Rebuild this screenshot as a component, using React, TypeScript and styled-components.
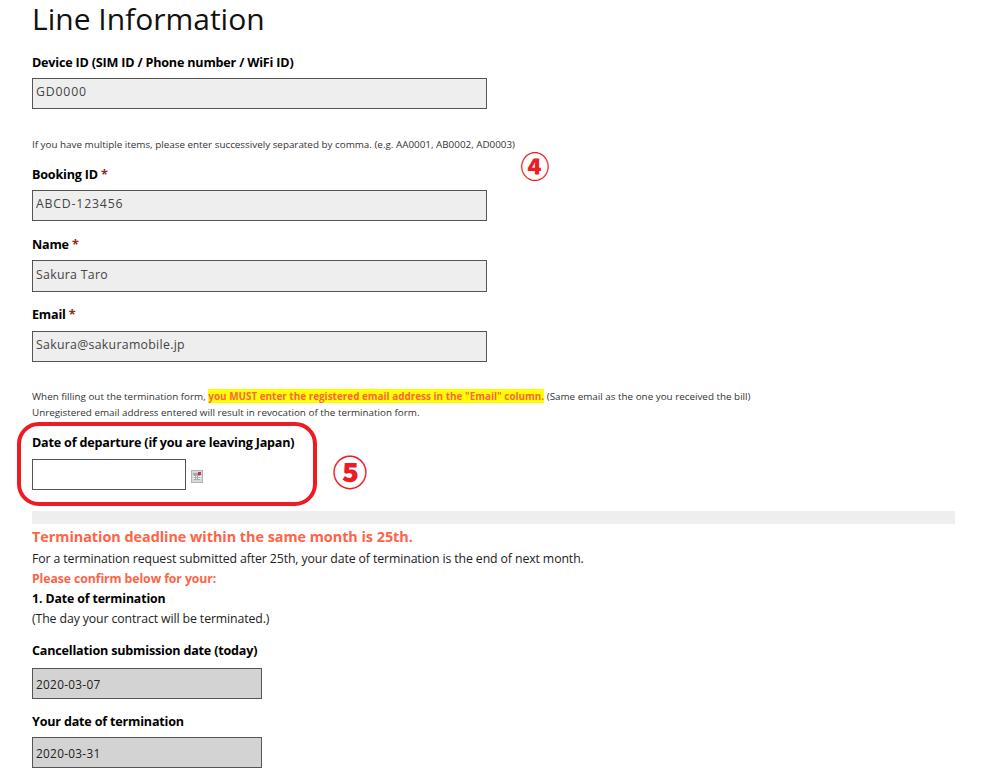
import React from "react";
import styled, { createGlobalStyle } from "styled-components";

const GlobalStyle = createGlobalStyle`
  html, body {
    margin: 0;
    padding: 0;
    background: #fff;
  }
  body {
    font-family: "Open Sans", "Noto Sans", "Liberation Sans", sans-serif;
    color: #000;
    overflow: hidden;
  }
`;

const Page = styled.div`
  position: relative;
  width: 993px;
  height: 774px;
  overflow: hidden;
  padding: 0 38px 0 32px;
  box-sizing: border-box;
`;

const Title = styled.h1`
  margin: 0;
  height: 40px;
  font-size: 30px;
  line-height: 37px;
  font-weight: 400;
  color: #111;
`;

const Field = styled.div<{ $top: number }>`
  margin-top: ${(p) => p.$top}px;
`;

const Label = styled.label<{ $gap?: number }>`
  display: block;
  height: 18px;
  margin-bottom: ${(p) => p.$gap ?? 6}px;
  font-size: 12.6px;
  line-height: 18px;
  font-weight: 700;
  letter-spacing: -0.2px;
  color: #000;
`;

const Required = styled.span`
  color: #8a2a1a;
`;

const Input = styled.input<{
  $width?: number;
  $height?: number;
  $tone?: "light" | "dark" | "blank";
  $code?: boolean;
}>`
  display: block;
  box-sizing: border-box;
  width: ${(p) => p.$width ?? 455}px;
  height: ${(p) => p.$height ?? 31}px;
  padding: ${(p) => (p.$tone === "dark" ? "0 3px" : "0 3px 4px")};
  border: 1px solid #555;
  border-radius: 0;
  outline: none;
  font-family: "Open Sans", "Noto Sans", sans-serif;
  font-size: ${(p) => (p.$tone === "dark" ? "11.8px" : "12.3px")};
  letter-spacing: ${(p) => (p.$code ? "0.8px" : "0.3px")};
  color: ${(p) => (p.$tone === "dark" ? "#222" : "#444")};
  background: ${(p) =>
    p.$tone === "dark" ? "#d3d3d3" : p.$tone === "blank" ? "#fff" : "#eee"};
`;

const Note = styled.p<{ $top: number }>`
  margin: ${(p) => p.$top}px 0 0;
  font-size: 9.85px;
  line-height: 16px;
  color: #333;
  white-space: nowrap;
`;

const Warning = styled.span`
  background: #ff0;
  color: #ff6347;
  font-weight: 700;
  letter-spacing: 0.04px;
`;

const DateRow = styled.div`
  display: flex;
  align-items: flex-end;
  gap: 5px;
`;

const CalendarIcon = () => (
  <svg width="12" height="13" viewBox="0 0 12 13" style={{ marginBottom: 7 }}>
    <rect x="0" y="0" width="12" height="13" fill="#b4b4b4" />
    <rect x="1" y="1" width="10" height="11" fill="#d8d8d8" />
    <rect x="2" y="3" width="8" height="7" fill="#f4f4f4" />
    <path d="M2.5 5.5h7M2.5 7.5h7M2.5 9.5h7M4.5 5v5M6.5 5v5" stroke="#aaa" strokeWidth="1" fill="none" />
    <rect x="2" y="3" width="5" height="2" fill="#a8a8a8" />
    <rect x="7" y="2" width="3" height="3" fill="#c2334a" />
  </svg>
);

const Divider = styled.div`
  height: 13px;
  margin-top: 21px;
  background: #eee;
`;

const Deadline = styled.h3`
  margin: 2px 0 2px;
  font-size: 14.4px;
  line-height: 21px;
  font-weight: 700;
  letter-spacing: -0.03px;
  color: #ff6347;
`;

const Line = styled.p<{ $strong?: boolean; $alert?: boolean }>`
  margin: 0;
  height: 20px;
  font-size: 12.3px;
  line-height: 20px;
  letter-spacing: ${(p) => (p.$alert ? "-0.1px" : "-0.11px")};
  font-weight: ${(p) => (p.$strong || p.$alert ? 700 : 400)};
  color: ${(p) => (p.$alert ? "#ff6347" : p.$strong ? "#000" : "#222")};
`;

const Highlight = styled.div`
  position: absolute;
  left: 17px;
  top: 422px;
  width: 300px;
  height: 84px;
  box-sizing: border-box;
  border: 4px solid #ed1c24;
  border-radius: 22px;
  pointer-events: none;
`;

const Marker = styled.span<{ $x: number; $y: number; $size: number }>`
  position: absolute;
  left: ${(p) => p.$x}px;
  top: ${(p) => p.$y}px;
  width: 40px;
  text-align: center;
  font-family: "Noto Sans CJK JP", "DejaVu Sans", sans-serif;
  font-size: ${(p) => p.$size}px;
  line-height: 40px;
  font-weight: 900;
  color: #ed1c24;
`;

const App = (): JSX.Element => {
  return (
    <>
      <GlobalStyle />
      <Page>
        <Title>Line Information</Title>

        <Field $top={14}>
          <Label>Device ID (SIM ID / Phone number / WiFi ID)</Label>
          <Input readOnly $code value="GD0000" />
        </Field>
        <Note $top={27}>
          If you have multiple items, please enter successively separated by comma. (e.g. AA0001, AB0002, AD0003)
        </Note>

        <Field $top={14}>
          <Label>
            Booking ID <Required>*</Required>
          </Label>
          <Input readOnly $code value="ABCD-123456" />
        </Field>
        <Field $top={15}>
          <Label>
            Name <Required>*</Required>
          </Label>
          <Input readOnly $height={32} value="Sakura Taro" />
        </Field>
        <Field $top={14}>
          <Label $gap={7}>
            Email <Required>*</Required>
          </Label>
          <Input readOnly value="Sakura@sakuramobile.jp" />
        </Field>

        <Note $top={26}>
          When filling out the termination form,{" "}
          <Warning>you MUST enter the registered email address in the "Email" column.</Warning>{" "}
          (Same email as the one you received the bill)
        </Note>
        <Note $top={0}>Unregistered email address entered will result in revocation of the termination form.</Note>

        <Field $top={14}>
          <Label $gap={7}>Date of departure (if you are leaving Japan)</Label>
          <DateRow>
            <Input $width={154} $tone="blank" />
            <CalendarIcon />
          </DateRow>
        </Field>

        <Divider />
        <Deadline>Termination deadline within the same month is 25th.</Deadline>
        <Line>For a termination request submitted after 25th, your date of termination is the end of next month.</Line>
        <Line $alert>Please confirm below for your:</Line>
        <Line $strong>1. Date of termination</Line>
        <Line>(The day your contract will be terminated.)</Line>

        <Field $top={13}>
          <Label $gap={8}>Cancellation submission date (today)</Label>
          <Input readOnly $width={230} $tone="dark" value="2020-03-07" />
        </Field>
        <Field $top={14}>
          <Label>Your date of termination</Label>
          <Input readOnly $width={230} $tone="dark" value="2020-03-31" />
        </Field>

        <Highlight />
        <Marker $x={515} $y={145} $size={29}>④</Marker>
        <Marker $x={330} $y={451} $size={35}>⑤</Marker>
      </Page>
    </>
  );
};

export default App;
